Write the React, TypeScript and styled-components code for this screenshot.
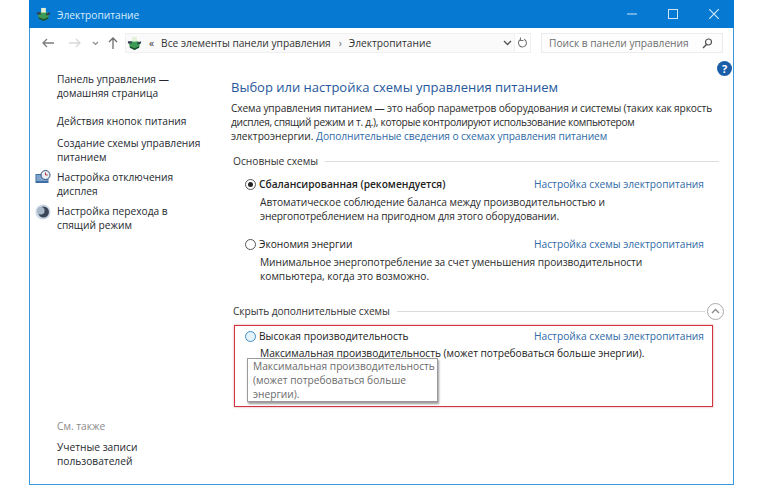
import React from "react";
import styled, { createGlobalStyle } from "styled-components";

const GlobalStyle = createGlobalStyle`
  html, body {
    margin: 0;
    padding: 0;
    background: #fff;
  }
  body {
    font-family: "Open Sans", "Noto Sans", "Liberation Sans", sans-serif;
    font-size: 10.2px;
    line-height: 14px;
    color: #1c1c1c;
  }
`;

const Page = styled.div`
  width: 760px;
  height: 485px;
  padding-left: 29px;
  box-sizing: border-box;
  overflow: hidden;
`;

const Window = styled.div`
  width: 705px;
  height: 485px;
  box-sizing: border-box;
  border: 1px solid #3c97dc;
  border-top: none;
  display: flex;
  flex-direction: column;
`;

const TitleBar = styled.div`
  height: 28px;
  margin: 0 -1px;
  background: #0679d3;
  display: flex;
  align-items: center;
  padding-left: 7px;
  color: #d8ecfb;
  flex-shrink: 0;
`;

const TitleText = styled.span`
  margin: 1px 0 0 6px;
  flex: 1;
`;

const WinButton = styled.div`
  width: 41px;
  height: 28px;
  display: flex;
  align-items: center;
  justify-content: center;
  color: #cfe6f8;
`;

const NavBar = styled.div`
  height: 30px;
  display: flex;
  align-items: center;
  padding-left: 8px;
  flex-shrink: 0;
`;

const NavIcon = styled.div<{ $width: number }>`
  width: ${(p) => p.$width}px;
  display: flex;
  justify-content: center;
  align-items: center;
`;

const AddressBox = styled.div`
  margin-left: -2px;
  width: 390px;
  height: 20px;
  box-sizing: border-box;
  background: #fafafa;
  border: 1px solid #f0f0f0;
  display: flex;
  align-items: center;
  padding-left: 1px;
  color: #333;
`;

const Crumb = styled.span`
  margin-left: 7px;
  white-space: nowrap;
`;

const CrumbSep = styled.span`
  margin-left: 8px;
  color: #666;
`;

const AddressEnd = styled.div`
  margin-left: auto;
  display: flex;
  align-items: center;
  padding-right: 2px;
`;

const RefreshBox = styled.div`
  width: 16px;
  height: 20px;
  box-sizing: border-box;
  border: 1px solid #f0f0f0;
  border-left: none;
  display: flex;
  align-items: center;
  justify-content: center;
`;

const SearchBox = styled.div`
  margin-left: 10px;
  width: 182px;
  height: 20px;
  box-sizing: border-box;
  border: 1px solid #ececec;
  background: #fdfdfd;
  display: flex;
  align-items: center;
  justify-content: space-between;
  padding: 0 9px 0 7px;
  color: #6d6d6d;
  white-space: nowrap;
`;

const Body = styled.div`
  flex: 1;
  display: flex;
  position: relative;
`;

const Sidebar = styled.div`
  width: 201px;
  flex-shrink: 0;
  padding: 14px 0 0 27px;
  box-sizing: border-box;
  display: flex;
  flex-direction: column;
`;

const SideLink = styled.div<{ $gap?: number }>`
  position: relative;
  color: #25292f;
  width: 155px;
  margin-top: ${(p) => p.$gap ?? 0}px;
`;

const SideIcon = styled.div`
  position: absolute;
  left: -22px;
  top: 0;
`;

const SeeAlso = styled.div`
  margin-top: auto;
  color: #8a8a8a;
`;

const SideFooter = styled.div`
  color: #25292f;
  margin: 7px 0 16px;
`;

const Content = styled.div`
  flex: 1;
  padding: 19px 0 0 0;
  position: relative;
`;

const Help = styled.div`
  position: absolute;
  right: 1px;
  top: 3px;
  width: 15px;
  height: 15px;
  border-radius: 50%;
  background: #1a5ea8;
  color: #fff;
  font-size: 11px;
  font-weight: 700;
  line-height: 15px;
  text-align: center;
`;

const Heading = styled.h1`
  margin: 0;
  font-size: 13px;
  font-weight: 400;
  line-height: 20px;
  color: #26579b;
`;

const Intro = styled.p`
  margin: 4px 0 0;
  white-space: nowrap;
  color: #2b2b2b;
`;

const Link = styled.span`
  color: #2f6aa6;
`;

const Tight = styled.span<{ $by: number }>`
  letter-spacing: ${(p) => -p.$by}px;
`;

const GroupHeader = styled.div<{ $top: number }>`
  display: flex;
  align-items: center;
  gap: 7px;
  margin: ${(p) => p.$top}px 14px 0 2px;
  color: #333;
  white-space: nowrap;
`;

const GroupLine = styled.div`
  flex: 1;
  height: 1px;
  background: #dcdcdc;
`;

const Collapse = styled.div`
  width: 15px;
  height: 15px;
  border: 1px solid #aaa;
  border-radius: 50%;
  display: flex;
  align-items: center;
  justify-content: center;
  margin: -2px -5px -2px -5px;
  flex-shrink: 0;
`;

const Plan = styled.div<{ $top: number }>`
  margin-top: ${(p) => p.$top}px;
  padding-left: 14px;
  box-sizing: border-box;
  width: 473px;
`;

const PlanRow = styled.div`
  display: flex;
  align-items: center;
  height: 14px;
`;

const Radio = styled.span<{ $on?: boolean; $hover?: boolean }>`
  width: 11px;
  height: 11px;
  box-sizing: border-box;
  border-radius: 50%;
  border: 1px solid ${(p) => (p.$hover ? "#3f8fc8" : "#555")};
  margin-right: 3px;
  display: inline-flex;
  align-items: center;
  justify-content: center;
  flex-shrink: 0;
  background: ${(p) => (p.$hover ? "#e6f2fa" : "#fff")};
  &::after {
    content: "";
    width: 5px;
    height: 5px;
    border-radius: 50%;
    background: ${(p) => (p.$on ? "#222" : "transparent")};
  }
`;

const PlanName = styled.span<{ $bold?: boolean }>`
  flex: 1;
  font-weight: ${(p) => (p.$bold ? 600 : 400)};
  color: #222;
`;

const PlanText = styled.div`
  margin: 4px 0 0 15px;
  white-space: nowrap;
  color: #2b2b2b;
`;

const Highlight = styled.div`
  position: relative;
  margin: 7px 0 0 3px;
  width: 479px;
  height: 82px;
  box-sizing: border-box;
  border: 1px solid #d2353f;
  box-shadow: 0 0 2px rgba(180, 60, 70, 0.5);
  padding: 3px 8px 0 10px;
`;

const HighlightText = styled.div`
  margin: 3px 0 0 15px;
  white-space: nowrap;
  color: #222;
`;

const Tooltip = styled.div`
  position: absolute;
  left: 12px;
  top: 32px;
  width: 191px;
  height: 44px;
  box-sizing: border-box;
  padding: 0 5px;
  background: #fff;
  border: 1px solid #9a9a9a;
  box-shadow: 1px 2px 2px rgba(70, 70, 70, 0.55);
  color: #6b6b6b;
  white-space: nowrap;
`;

const PowerIcon = ({ size }: { size: number }) => (
  <svg width={size} height={size} viewBox="0 0 16 16">
    <path d="M2 7l6-3 6 3-1 5-5 3-5-3z" fill="#3c9c55" />
    <path d="M3 11l5 2 5-2v1.500l-5 2.500-5-2.500z" fill="#1c4f2d" />
    <path d="M5.500 1h5v5h-5z" fill="#e4f0d8" />
    <path d="M1 5.500h4v2.500H1zM11 7l4-1.500V8l-4 1z" fill="#33414e" />
  </svg>
);

const DisplayIcon = () => (
  <svg width="17" height="15" viewBox="0 0 17 15">
    <rect x="0.5" y="4" width="13" height="9" fill="#3f6ea6" />
    <rect x="1.5" y="5" width="11" height="6" fill="#7fa3cc" />
    <circle cx="10.500" cy="5" r="4.500" fill="#e8eef5" stroke="#35527c" />
    <path d="M10.500 2.500V5h2.200" stroke="#b03838" fill="none" />
  </svg>
);

const SleepIcon = () => (
  <svg width="16" height="16" viewBox="0 0 16 16">
    <circle cx="8" cy="8" r="7.500" fill="#c9d6e3" />
    <circle cx="8.500" cy="8" r="5.500" fill="#3b4756" />
    <circle cx="5.800" cy="6.800" r="3.800" fill="#a9b9ca" />
  </svg>
);

const App = () => {
  return (
    <Page>
      <GlobalStyle />
      <Window>
        <TitleBar>
          <PowerIcon size={15} />
          <TitleText>Электропитание</TitleText>
          <WinButton>
            <svg width="10" height="10" viewBox="0 0 10 10">
              <path d="M0 5h10" stroke="currentColor" />
            </svg>
          </WinButton>
          <WinButton>
            <svg width="10" height="10" viewBox="0 0 10 10">
              <rect x="0.5" y="0.5" width="9" height="9" fill="none" stroke="currentColor" />
            </svg>
          </WinButton>
          <WinButton>
            <svg width="10" height="10" viewBox="0 0 10 10">
              <path d="M0 0l10 10M10 0L0 10" stroke="currentColor" strokeWidth="1.2" />
            </svg>
          </WinButton>
        </TitleBar>
        <NavBar>
          <NavIcon $width={20}>
            <svg width="12" height="10" viewBox="0 0 12 10">
              <path d="M12 5H1M5 1L1 5l4 4" fill="none" stroke="#7d7d7d" strokeWidth="1.3" />
            </svg>
          </NavIcon>
          <NavIcon $width={33}>
            <svg width="12" height="10" viewBox="0 0 12 10">
              <path d="M0 5h11M7 1l4 4-4 4" fill="none" stroke="#d8d8d8" strokeWidth="1.3" />
            </svg>
          </NavIcon>
          <NavIcon $width={8}>
            <svg width="7" height="5" viewBox="0 0 7 5">
              <path d="M1 1l2.500 2.500L6 1" fill="none" stroke="#8f8f8f" strokeWidth="1.2" />
            </svg>
          </NavIcon>
          <NavIcon $width={28}>
            <svg width="10" height="12" viewBox="0 0 10 12">
              <path d="M5 12V1M1 5l4-4 4 4" fill="none" stroke="#6d6d6d" strokeWidth="1.3" />
            </svg>
          </NavIcon>
          <AddressBox>
            <PowerIcon size={15} />
            <Crumb>«</Crumb>
            <Crumb>Все элементы панели управления</Crumb>
            <CrumbSep>›</CrumbSep>
            <Crumb>Электропитание</Crumb>
            <AddressEnd>
              <svg width="9" height="6" viewBox="0 0 9 6">
                <path d="M1 1l3.500 3.500L8 1" fill="none" stroke="#555" strokeWidth="1.4" />
              </svg>
            </AddressEnd>
          </AddressBox>
          <RefreshBox>
            <svg width="11" height="12" viewBox="0 0 11 12">
              <path d="M3.500 2.500a4 4 0 1 0 3.500-.2M3.500 0.500v3h3" fill="none" stroke="#777" strokeWidth="1.1" />
            </svg>
          </RefreshBox>
          <SearchBox>
            Поиск в панели управления
            <svg width="11" height="11" viewBox="0 0 11 11">
              <circle cx="6.500" cy="4" r="3" fill="none" stroke="#555" strokeWidth="1.2" />
              <path d="M4.500 6.500L1 10" stroke="#555" strokeWidth="1.5" />
            </svg>
          </SearchBox>
        </NavBar>
        <Body>
          <Sidebar>
            <SideLink>Панель управления — домашняя страница</SideLink>
            <SideLink $gap={14}>Действия кнопок питания</SideLink>
            <SideLink $gap={8}>Создание схемы управления питанием</SideLink>
            <SideLink $gap={6}>
              <SideIcon>
                <DisplayIcon />
              </SideIcon>
              Настройка отключения дисплея
            </SideLink>
            <SideLink $gap={6}>
              <SideIcon>
                <SleepIcon />
              </SideIcon>
              Настройка перехода в
              <br />
              спящий режим
            </SideLink>
            <SeeAlso>См. также</SeeAlso>
            <SideFooter>
              Учетные записи
              <br />
              пользователей
            </SideFooter>
          </Sidebar>
          <Content>
            <Help>?</Help>
            <Heading>Выбор или настройка схемы управления питанием</Heading>
            <Intro>
              <Tight $by={0.14}>
                Схема управления питанием — это набор параметров оборудования и системы (таких как яркость
              </Tight>
              <br />
              <Tight $by={0.32}>дисплея, спящий режим и т. д.), которые контролируют использование компьютером</Tight>
              <br />
              электроэнергии.{" "}
              <Tight $by={0.09}>
                <Link>Дополнительные сведения о схемах управления питанием</Link>
              </Tight>
            </Intro>
            <GroupHeader $top={11}>
              Основные схемы
              <GroupLine />
            </GroupHeader>
            <Plan $top={9}>
              <PlanRow>
                <Radio $on />
                <PlanName $bold>Сбалансированная (рекомендуется)</PlanName>
                <Link>Настройка схемы электропитания</Link>
              </PlanRow>
              <PlanText>
                <Tight $by={0.05}>Автоматическое соблюдение баланса между производительностью и</Tight>
                <br />
                <Tight $by={0.14}>энергопотреблением на пригодном для этого оборудовании.</Tight>
              </PlanText>
            </Plan>
            <Plan $top={14}>
              <PlanRow>
                <Radio />
                <PlanName>Экономия энергии</PlanName>
                <Link>Настройка схемы электропитания</Link>
              </PlanRow>
              <PlanText>
                <Tight $by={0.06}>Минимальное энергопотребление за счет уменьшения производительности</Tight>
                <br />
                компьютера, когда это возможно.
              </PlanText>
            </Plan>
            <GroupHeader $top={21}>
              <Tight $by={0.07}>Скрыть дополнительные схемы</Tight>
              <GroupLine />
              <Collapse>
                <svg width="9" height="6" viewBox="0 0 9 6">
                  <path d="M1 5l3.500-3.500L8 5" fill="none" stroke="#888" strokeWidth="1.3" />
                </svg>
              </Collapse>
            </GroupHeader>
            <Highlight>
              <PlanRow>
                <Radio $hover />
                <PlanName>Высокая производительность</PlanName>
                <Link>Настройка схемы электропитания</Link>
              </PlanRow>
              <HighlightText>
                <Tight $by={0.03}>Максимальная производительность (может потребоваться больше энергии).</Tight>
              </HighlightText>
              <Tooltip>
                Максимальная производительность
                <br />
                (может потребоваться больше
                <br />
                энергии).
              </Tooltip>
            </Highlight>
          </Content>
        </Body>
      </Window>
    </Page>
  );
};

export default App;
